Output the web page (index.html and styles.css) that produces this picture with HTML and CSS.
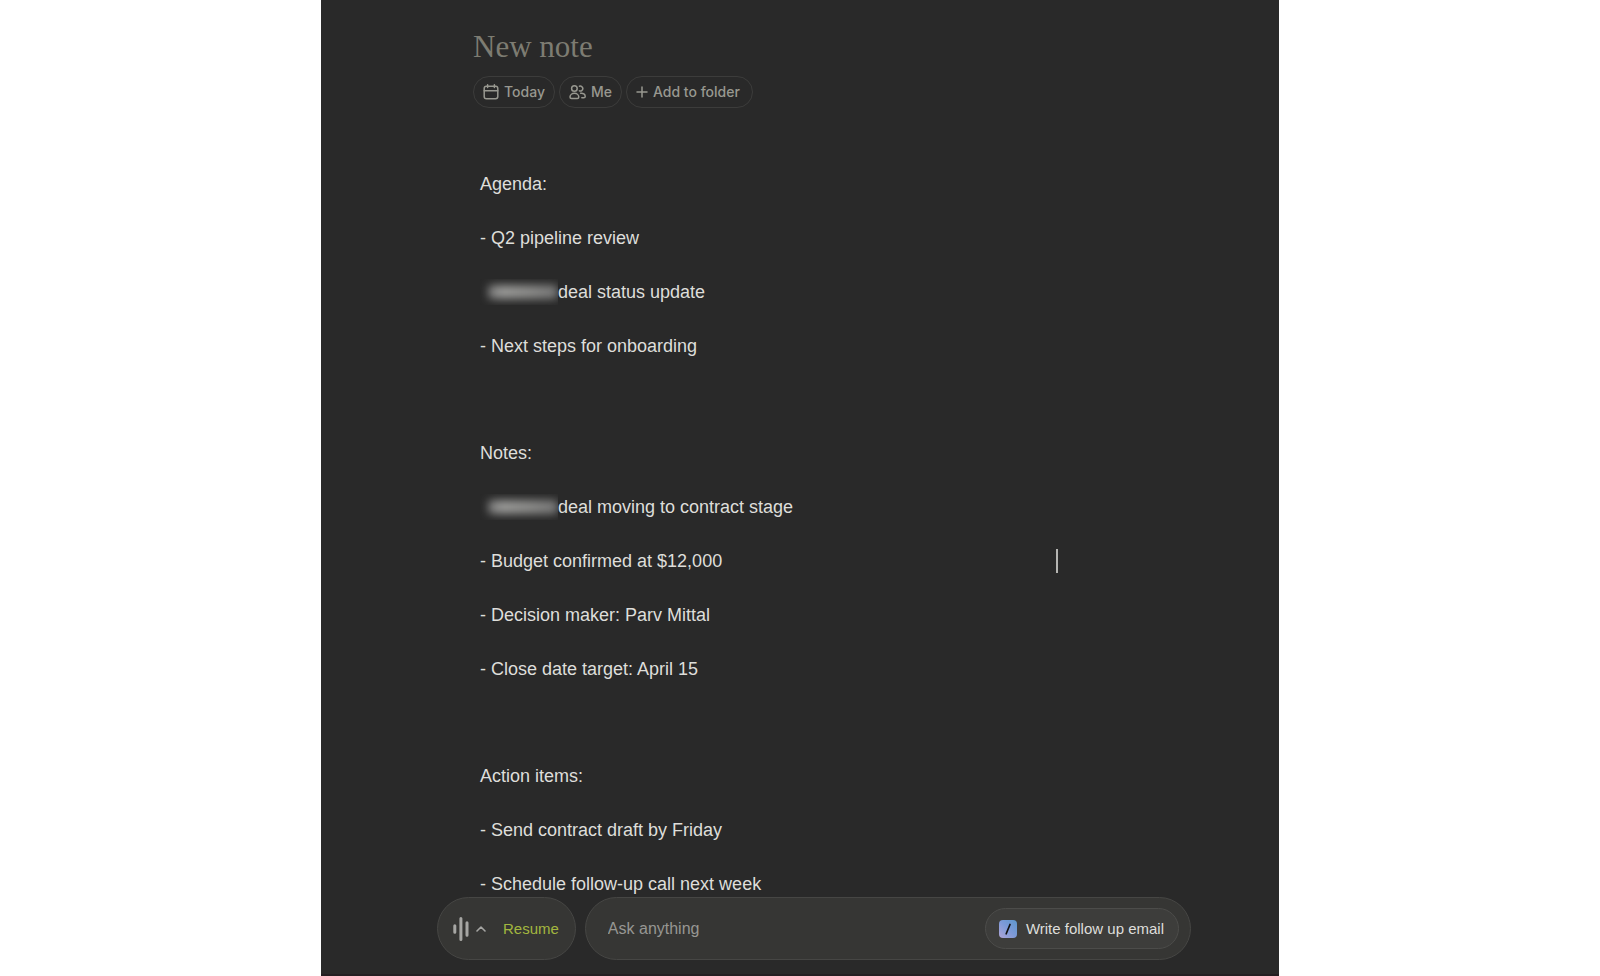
FILE: index.html
```html
<!DOCTYPE html>
<html lang="en">
<head>
    <meta charset="UTF-8">
    <meta name="viewport" content="width=device-width, initial-scale=1.0">
    <title>New note</title>
    <link rel="stylesheet" href="styles.css">
</head>
<body>
    <div class="app">
        <header class="note-header">
            <h1 class="note-title">New note</h1>
            <div class="chips">
                <button class="chip" type="button">
                    <svg width="16" height="16" viewBox="0 0 16 16" fill="none" stroke="currentColor" stroke-width="1.5" stroke-linecap="round">
                        <rect x="1.2" y="2.3" width="13.6" height="12.5" rx="2.2"/>
                        <path d="M1.2 6.8h13.6M4.6 0.8v2.6M11.4 0.8v2.6"/>
                    </svg>
                    Today
                </button>
                <button class="chip" type="button">
                    <svg width="17" height="16" viewBox="0 0 17 16" fill="none" stroke="currentColor" stroke-width="1.5" stroke-linecap="round" stroke-linejoin="round">
                        <circle cx="5.4" cy="4.5" r="2.8"/>
                        <path d="M5.4 9.3c-2.6 0-4.4 1.8-4.4 3.8 0 .9.6 1.5 1.5 1.5h5.8c.9 0 1.5-.6 1.5-1.5 0-2-1.8-3.8-4.4-3.8z"/>
                        <path d="M10.4 2.3a2.5 2.5 0 1 1 0 4.6M11.6 9.2c2.6-.4 4.6 1.3 4.6 3.2 0 .9-.5 1.4-1.4 1.4h-2"/>
                    </svg>
                    Me
                </button>
                <button class="chip chip-folder" type="button">
                    <svg width="12" height="12" viewBox="0 0 12 12" fill="none" stroke="currentColor" stroke-width="1.5" stroke-linecap="round">
                        <path d="M6 1v10M1 6h10"/>
                    </svg>
                    Add to folder
                </button>
            </div>
        </header>

        <main class="note-body">
            <section class="block">
                <p>Agenda:</p>
                <p>- Q2 pipeline review</p>
                <p><span class="redacted"></span>deal status update</p>
                <p>- Next steps for onboarding</p>
            </section>
            <section class="block">
                <p>Notes:</p>
                <p><span class="redacted"></span>deal moving to contract stage</p>
                <p>- Budget confirmed at $12,000<span class="caret"></span></p>
                <p>- Decision maker: Parv Mittal</p>
                <p>- Close date target: April 15</p>
            </section>
            <section class="block">
                <p>Action items:</p>
                <p>- Send contract draft by Friday</p>
                <p>- Schedule follow-up call next week</p>
            </section>
        </main>

        <footer class="toolbar">
            <div class="recorder">
                <button class="levels" type="button" aria-label="Recording options">
                    <svg width="16" height="26" viewBox="0 0 16 26" stroke="currentColor" stroke-width="3" stroke-linecap="round">
                        <path d="M1.8 9.8v6.4M7.9 2.5v21M14 6.8v12.4"/>
                    </svg>
                    <svg width="10" height="8" viewBox="0 0 10 8" fill="none" stroke="currentColor" stroke-width="1.6" stroke-linecap="round" stroke-linejoin="round">
                        <path d="M1 6l4-4 4 4"/>
                    </svg>
                </button>
                <button class="resume" type="button">Resume</button>
            </div>
            <form class="ask">
                <input class="ask-input" type="text" placeholder="Ask anything" aria-label="Ask anything">
                <button class="suggestion" type="button">
                    <svg width="18" height="18" viewBox="0 0 18 18">
                        <defs>
                            <linearGradient id="slash" x1="0" y1="1" x2="1" y2="0">
                                <stop offset="0" stop-color="#b0a5d6"/>
                                <stop offset="0.5" stop-color="#7d9ad8"/>
                                <stop offset="1" stop-color="#5c97cc"/>
                            </linearGradient>
                        </defs>
                        <rect width="18" height="18" rx="4" fill="url(#slash)"/>
                        <path d="M11 4.5L7.2 13.8" stroke="#111" stroke-width="1.7" stroke-linecap="round"/>
                    </svg>
                    Write follow up email
                </button>
            </form>
        </footer>
    </div>
</body>
</html>
```

FILE: styles.css
```css
* {
    box-sizing: border-box;
}
body {
    margin: 0;
    background: #fff;
    font-family: "Liberation Sans", Arial, sans-serif;
}
button, input {
    font-family: inherit;
    border: 0;
    padding: 0;
    background: none;
}
svg {
    flex: none;
}
.app {
    max-width: 958px;
    min-height: 100vh;
    margin: 0 auto;
    background: #292929;
    border-bottom: 2px solid #241f22;
}
.note-header {
    padding: 29px 152px 0;
}
.note-title {
    margin: 0 0 11px;
    font-family: "Liberation Serif", serif;
    font-size: 31px;
    font-weight: 400;
    line-height: 36px;
    color: #7d7c72;
}
.chips {
    display: flex;
    gap: 4px;
}
.chip {
    display: flex;
    align-items: center;
    gap: 5px;
    height: 32px;
    padding: 0 9px 1px;
    border: 1px solid #3c3c3b;
    border-radius: 16px;
    font-family: Inter, sans-serif;
    font-size: 14px;
    font-weight: 500;
    color: #989890;
}
.chip-folder {
    padding-right: 12px;
}
.note-body {
    padding: 49px 221px 0 159px;
    font-size: 18px;
    line-height: 54px;
    color: #dededa;
}
.block + .block {
    margin-top: 53px;
}
.block p {
    display: flex;
    align-items: center;
    height: 54px;
    margin: 0;
}
/* blurred client name */
.redacted {
    display: flex;
    align-items: center;
    width: 78px;
    height: 26px;
    padding-left: 8px;
    overflow: hidden;
}
.redacted::before {
    content: "";
    flex: 1;
    height: 14px;
    background: linear-gradient(90deg, #777 0, #9a9a98 20%, #8c8c8a 60%, #777 100%);
    border-radius: 4px;
    filter: blur(4px);
}
.caret {
    width: 2px;
    height: 24px;
    margin-left: auto;
    background: #b5b5b2;
}
.toolbar {
    display: flex;
    gap: 9px;
    margin-top: -14px;
    padding: 0 88px 14px 116px;
}
.recorder, .ask {
    display: flex;
    align-items: center;
    height: 63px;
    background: #363634;
    border: 1px solid #464644;
    border-radius: 32px;
}
.recorder {
    gap: 17px;
    padding: 0 16px 0 15px;
}
.levels {
    display: flex;
    align-items: center;
    gap: 7px;
    color: #a6a6a3;
}
.resume {
    font-size: 15px;
    color: #a3b63f;
}
.ask {
    flex: 1;
    padding: 0 11px 0 22px;
}
.ask-input {
    flex: 1;
    min-width: 0;
    font-size: 16px;
    color: #dededa;
    outline: none;
}
.ask-input::placeholder {
    color: #979793;
    opacity: 1;
}
.suggestion {
    display: flex;
    align-items: center;
    gap: 9px;
    height: 41px;
    padding: 0 14px 0 13px;
    background: #3d3d3b;
    border: 1px solid #4c4c4a;
    border-radius: 21px;
    font-size: 15px;
    color: #dededa;
}
```
